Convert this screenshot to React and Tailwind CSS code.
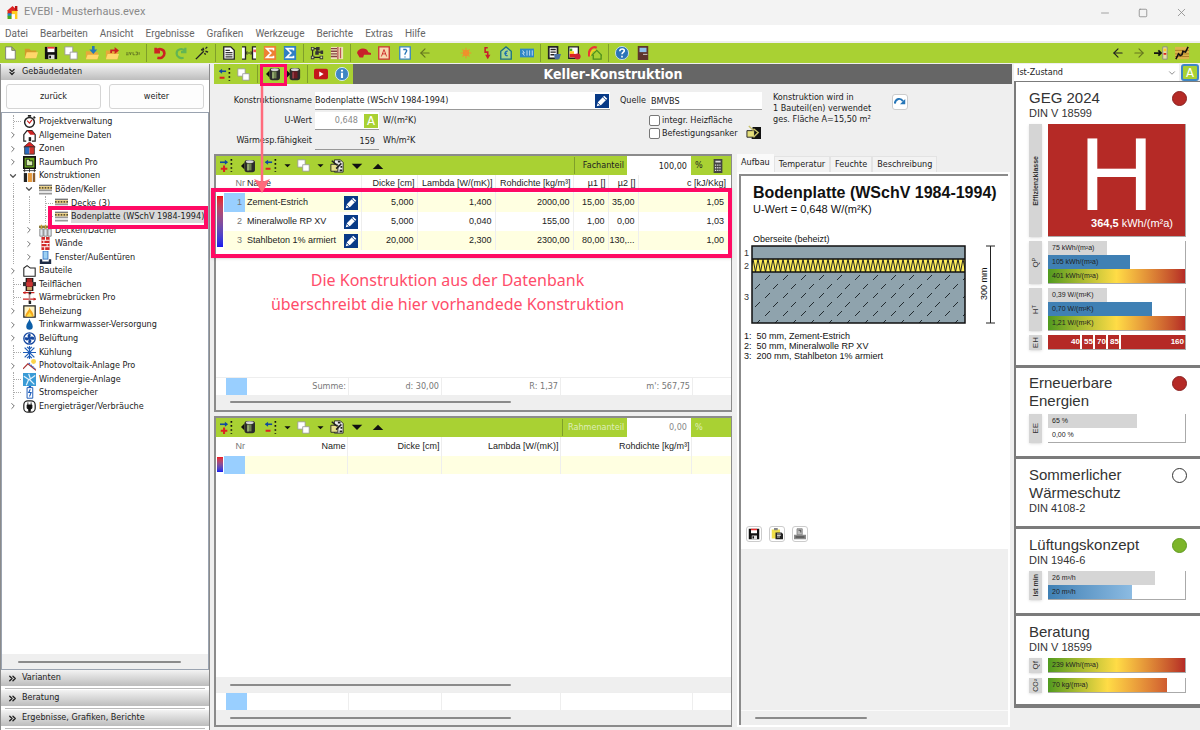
import React, { useState } from 'react';
import { ChevronDown, ChevronRight, ChevronsDown, ChevronsRight, Minus, Square, X, ArrowLeft, ArrowRight } from 'lucide-react';

const Svg = ({ size = 14, children }) => (
  <svg width={size} height={size} viewBox="0 0 16 16" fill="none" className="shrink-0" aria-hidden="true">
    {children}
  </svg>
);

const icons = {
  logo: (
    <>
      <path d="M8 0 15 6H1Z" fill="#d22" />
      <path d="M11 0h3v6h-3z" fill="#b11" />
      <path d="M2 6h12v10H2z" fill="#fc2" />
      <path d="M2 6h5v4H2z" fill="#d22" />
      <path d="M2 9h5v4H2z" fill="#1a8ad0" />
      <path d="M2 12h5v4H2z" fill="#4a2" />
      <path d="M7 10h4v6H7z" fill="#fff" />
    </>
  ),
  file: <path d="M3 1h7l4 4v10H3zM10 1v4h4" fill="#fff" stroke="#777" />,
  folder: (
    <>
      <path d="M1 3h5l2 2h6v9H1z" fill="#d29a2a" />
      <path d="M3 7h13l-2 7H1z" fill="#ffd76a" />
    </>
  ),
  save: (
    <>
      <path d="M1 1h14v14H1z" fill="#111" />
      <path d="M4 1h8v6H4z" fill="#fff" />
      <path d="M4 1h8v2H4z" fill="#e33" />
      <path d="M5 10h7v5H5z" fill="#ddd" />
      <path d="M6 11h2v3H6z" fill="#111" />
    </>
  ),
  copy: (
    <>
      <path d="M1 1h9v9H1z" fill="#fff" stroke="#999" />
      <path d="M7 7h8v8H7z" fill="#fff" stroke="#999" />
    </>
  ),
  folderIn: (
    <>
      <path d="M1 6h5l1 1h8v8H1z" fill="#e8a93a" />
      <path d="M3 10h13l-2 5H1z" fill="#ffd76a" />
      <path d="M8 0h3v4h3L9.500 9 5 4h3z" fill="#2676b8" />
    </>
  ),
  folderOut: (
    <>
      <path d="M1 5h5l1 1h8v9H1z" fill="#e8a93a" />
      <path d="M3 9h13l-2 6H1z" fill="#ffd76a" />
      <path d="M6 8V4h5V1l5 4-5 4V6H8v2z" fill="#c22" />
    </>
  ),
  brand: <path d="M0 8h3M0 10h3M4 7l1 3 1-3M8 7v3h2M11 7h2v3h-2M15 7v3" stroke="#5b6e20" />,
  undo: <path d="M3 2v5h5M3 6c3-4 10-3 10 2.500 0 4-4 6-8 5" stroke="#cc2222" strokeWidth="3" />,
  redo: <path d="M13 2v5H8M13 6C10 2 3 3 3 8.500c0 4 4 6 8 5" stroke="#62b553" strokeWidth="2.500" />,
  wand: <path d="m1 15 9-9M9 2l1 3M14 1l-2 2M15 7l-3-1M7 4l2 1M12 10l-1-2" stroke="#222" strokeWidth="1.600" />,
  doc: (
    <>
      <path d="M2 1h8l4 4v10H2z" fill="#fff" stroke="#222" strokeWidth="1.500" />
      <path d="M4 5h5M4 7.500h8M4 10h8M4 12.500h8" stroke="#333" strokeWidth="1.300" />
    </>
  ),
  compare: (
    <>
      <path d="M0 1h4v14H0M16 1h-4v14h4" fill="#fff" stroke="#222" strokeWidth="1.500" />
      <path d="M4 8h8M6 6 4 8l2 2M10 6l2 2-2 2" stroke="#222" />
      <path d="M13 4h3v3h-3z" fill="#e55" />
    </>
  ),
  sumOrange: (
    <>
      <path d="M1 0h14v16H1z" fill="#ee8033" />
      <path d="M12 5V3H4l5 5-5 5h8v-2" stroke="#fff" strokeWidth="1.800" />
    </>
  ),
  sumBlue: (
    <>
      <path d="M1 0h14v16H1z" fill="#2f7fc4" />
      <path d="M12 5V3H4l5 5-5 5h8v-2" stroke="#fff" strokeWidth="1.800" />
    </>
  ),
  flow: (
    <>
      <path d="M3 3h5v4h5M3 3v10h10M8 3v6" stroke="#222" strokeWidth="1.300" />
      <path d="M1 1h4v4H1zM7 1h4v4H7zM1 11h4v4H1zM6 6h4v4H6zM12 5h3v4h-3zM11 11h4v4h-4z" fill="#333" />
      <path d="M2 2h2v2H2zM2 12h2v2H2zM12 12h2v2h-2z" fill="#cfe39a" />
    </>
  ),
  list: (
    <>
      <path d="M1 1h14v14H1z" fill="#efe2b8" />
      <path d="M1 3h7M1 6h7M1 9h7M1 12h7" stroke="#844" strokeWidth="1.500" />
      <path d="M9 1v14M12 2v12" stroke="#b55" strokeWidth="1.500" />
    </>
  ),
  cap: <path d="M0 8c1-6 11-7 13-1l3 1v2H8l-1 3H3z" fill="#c8202a" />,
  pdf: (
    <>
      <path d="M2 1h12v14H2z" fill="#f7d9b0" stroke="#c33" strokeWidth="1.500" />
      <path d="m5 12 3-8 3 8M6 9h4" stroke="#c22" />
    </>
  ),
  query: (
    <>
      <path d="M2 1h12v14H2z" fill="#fff" stroke="#3b86c0" strokeWidth="1.500" />
      <path d="M6 4h3l1 1.500L8 9v1M8 12v1" stroke="#2676b8" strokeWidth="1.500" />
    </>
  ),
  sun: (
    <>
      <circle cx="8" cy="8" r="3.500" fill="#f08a2c" />
      <path d="M8 2v12M2 8h12M4 4l8 8M12 4l-8 8" stroke="#f0912c" strokeWidth="1.300" />
    </>
  ),
  bolt: (
    <>
      <path d="M10 2H7v5h3v4" stroke="#c8202a" strokeWidth="1.800" />
      <path d="M7 10h6l-3 5z" fill="#c8202a" />
    </>
  ),
  house: (
    <>
      <path d="M2 15V6l6-5 6 5v9z" fill="#a9d68a" stroke="#1c6f86" strokeWidth="1.500" />
      <path d="M10 6C6 5 6 12 10 11M6 8.500h3" stroke="#1d6fb0" strokeWidth="1.500" />
    </>
  ),
  grid: (
    <>
      <path d="M0 3h16v10H0z" fill="#2f86c6" />
      <path d="m3 5 2 3H3l2 3M8 5v6M11 5v6M14 5v6" stroke="#cfe5f5" />
    </>
  ),
  report: (
    <>
      <path d="M2 1h10v13H2z" fill="#fff" stroke="#222" strokeWidth="2" />
      <path d="M4 4h6M4 7h6M4 10h4" stroke="#222" strokeWidth="1.500" />
      <path d="M8 9h8l-2 6H9z" fill="#4a6fa0" />
    </>
  ),
  energy: (
    <>
      <path d="M2 1h11v13H2z" fill="#fff" stroke="#222" strokeWidth="1.500" />
      <path d="M3 3h3v3H3z" fill="#4a2" />
      <path d="M3 6h5v3H3z" fill="#fc2" />
      <path d="M3 9h7v4H3z" fill="#d22" />
      <circle cx="12" cy="12" r="3.500" fill="#cc2233" />
    </>
  ),
  roof: (
    <>
      <path d="M1 12c-1-9 5-12 9-10" stroke="#e33" strokeWidth="2.500" />
      <path d="M3 11c0-5 3-7 6-6" stroke="#fc2" strokeWidth="1.500" />
      <path d="m4 11 6-6 6 6M6 10v5h9v-5" stroke="#4f8f1d" strokeWidth="1.500" />
    </>
  ),
  help: (
    <>
      <circle cx="8" cy="8" r="7.500" fill="#2a74b8" stroke="#cfe5f5" />
      <path d="M5.500 6c0-4 6-3 5 0-1 1.500-2.500 1.500-2.500 3.500M8 11v2" stroke="#fff" strokeWidth="1.800" />
    </>
  ),
  door: (
    <>
      <path d="M2 0h12v16H2z" fill="#5e342c" />
      <path d="M4 2h8v5H4z" fill="#8fc0ea" />
      <path d="M8 9h5v1H8z" fill="#ddd" />
    </>
  ),
  toPanel: (
    <>
      <path d="M0 8h7M5 5l3 3-3 3" stroke="#111" strokeWidth="2" />
      <path d="M10 1h5v14h-5z" fill="#e8dfa0" stroke="#888" />
      <path d="M11 3h3v3h-3z" fill="#fc2" />
      <path d="M11 8h3v2h-3z" fill="#d22" />
    </>
  ),
  chart: (
    <>
      <path d="M0 1h16v14H0z" fill="#dcb44c" />
      <path d="M0 5h16M0 9h16M0 12h16" stroke="#a87a22" />
      <path d="m1 15 3-6 2 2 2-1 1-4 3 1 3-6" stroke="#111" strokeWidth="1.800" />
    </>
  ),
  removeRow: (
    <>
      <path d="M2 4h8" stroke="#124a9c" strokeWidth="2" />
      <path d="M5 1 1 4l4 3z" fill="#124a9c" />
      <path d="M2 12h6" stroke="#d22" strokeWidth="2.500" />
      <path d="M14 0v16" stroke="#111" strokeWidth="2" strokeDasharray="2 3" />
    </>
  ),
  addRow: (
    <>
      <path d="M0 4h8" stroke="#124a9c" strokeWidth="2" />
      <path d="m6 1 4 3-4 3z" fill="#124a9c" />
      <path d="M1 12h8M5 8v8" stroke="#d22" strokeWidth="2.500" />
      <path d="M14 0v16" stroke="#111" strokeWidth="2" strokeDasharray="2 3" />
    </>
  ),
  dbIn: (
    <>
      <path d="M4 4 0 8l4 4z" fill="#111" />
      <rect x="4" y="1" width="12" height="14" rx="3" fill="#2c2c2c" />
      <path d="M7 5h5v8H7z" fill="#6d8050" />
      <path d="M8 6v7" stroke="#a9bd80" strokeWidth="1.500" />
      <ellipse cx="10" cy="3" rx="4.500" ry="1.500" fill="#d5d5d5" />
    </>
  ),
  dbOut: (
    <>
      <path d="m0 4 4 4-4 4z" fill="#111" />
      <rect x="3" y="1" width="12" height="14" rx="3" fill="#2c2c2c" />
      <path d="M6 5h6v8H6z" fill="#6e1a22" />
      <path d="M7 6v7" stroke="#a04a52" strokeWidth="1.500" />
      <ellipse cx="9" cy="3" rx="4.500" ry="1.500" fill="#d5d5d5" />
    </>
  ),
  video: (
    <>
      <rect x="0" y="2" width="16" height="12" rx="2" fill="#c4161c" />
      <path d="m6 5 5 3-5 3z" fill="#fff" />
    </>
  ),
  info: (
    <>
      <circle cx="8" cy="8" r="7.500" fill="#3f86c4" stroke="#e3f0fa" />
      <path d="M8 3v2M8 6.500v6" stroke="#fff" strokeWidth="2.400" />
    </>
  ),
  editDoc: (
    <>
      <path d="M5 1h7l3 3v11H5z" fill="#eee" stroke="#222" />
      <path d="M1 6h8v8H1z" fill="#e5df8a" stroke="#222" />
      <path d="m2 2 6 5M13 5l-6 6M9 3h3M11 13h3M12 9h2" stroke="#222" strokeWidth="1.800" />
    </>
  ),
  down: <path d="M1 5h14l-7 7z" fill="#111" />,
  up: <path d="M1 12h14L8 5z" fill="#111" />,
  pencil: (
    <>
      <path d="M0 0h16v16H0z" fill="#083a86" />
      <path d="m2 14 1.500-5 7-7 3.500 3.500-7 7z" fill="#fff" />
      <path d="m9 3.500 3.500 3.500M3 10l3 3" stroke="#083a86" />
    </>
  ),
  calc: (
    <>
      <path d="M3 0h10v16H3z" fill="#444" />
      <path d="M5 2h6v2H5z" fill="#ddd" />
      <path d="M4.500 7h7M4.500 10h7M4.500 13h7" stroke="#ddd" strokeWidth="1.500" strokeDasharray="1.500 1" />
    </>
  ),
  anchor: (
    <>
      <path d="M7 2h9v13H6z" fill="#111" />
      <path d="M1 6h8v7H1z" fill="#e5df7a" stroke="#222" />
      <path d="M3 1 8 6M8 4l5 4-5 5" stroke="#c8c26a" strokeWidth="1.500" />
    </>
  ),
  jump: (
    <>
      <path d="M1 10c1-7 8-8 11-3" stroke="#2676b8" strokeWidth="2.600" />
      <path d="M15 4v7H8z" fill="#2676b8" />
    </>
  ),
  clip: (
    <>
      <path d="M1 2h11v12H1z" fill="#f0e04a" />
      <path d="M4 0h5v3H4z" fill="#888" />
      <path d="M6 6h8l2 2v7H6z" fill="#222" />
      <path d="M8 8h5M8 10h5M8 12h4" stroke="#fff" />
    </>
  ),
  stamp: (
    <>
      <path d="M4 1h7v8H4z" fill="#bbb" stroke="#777" />
      <path d="M0 9h16v6H0z" fill="#8a8a8a" />
      <path d="M2 12h12" stroke="#444" strokeWidth="1.500" />
      <path d="M6 3h3v3" stroke="#333" />
    </>
  ),
  clock: (
    <>
      <circle cx="8" cy="9" r="6" fill="#fff" stroke="#222" strokeWidth="1.800" />
      <path d="M6 1h4M13 2l2 2" stroke="#222" strokeWidth="2" />
      <path d="m5 7 3 3 3-4" stroke="#c22" strokeWidth="1.500" />
    </>
  ),
  home: (
    <>
      <path d="M4 15H1V7l4-5h6l4 5v8h-4" fill="#fff" stroke="#222" strokeWidth="1.500" />
      <path d="M5 2h6l4 5H9z" fill="#c22" />
      <path d="M7 10h3v5H7z" fill="#222" />
    </>
  ),
  zones: (
    <>
      <path d="M8 0 15 6H1z" fill="#d22" stroke="#522" />
      <path d="M2 6h6v9H2z" fill="#2b6cc0" />
      <path d="M8 6h6v9H8z" fill="#d0342c" />
      <path d="M2 6h12v9H2z" stroke="#333" />
    </>
  ),
  room: (
    <>
      <path d="M1 1h14v14H1z" fill="#6cab1f" stroke="#111" strokeWidth="2" />
      <path d="M4 4h4v2h4v6H4z" fill="#d5ecad" stroke="#111" />
    </>
  ),
  layers: (
    <>
      <path d="M0 2h16M2 0v4M8 0v4M14 0v4" stroke="#222" />
      <path d="M1 5h4v11H1z" fill="#222" />
      <path d="M6 5h5v11H6z" fill="#e79a3c" />
      <path d="M12 5h3v11h-3z" fill="#8a5a2b" />
    </>
  ),
  floor: (
    <>
      <path d="M0 2h16v2H0z" fill="#777" />
      <path d="M0 4h16v4H0z" fill="#f1d27a" />
      <path d="M0 6h16" stroke="#222" strokeWidth="1.500" strokeDasharray="2 1.500" />
      <path d="M0 9h16M0 13h16" stroke="#999" strokeWidth="2" />
    </>
  ),
  ceiling: (
    <>
      <path d="M0 2h16v3H0z" fill="#8a7a3a" />
      <path d="M1 6h4v9H1zM6 6h4v9H6zM11 6h4v9h-4z" fill="#dfe7ee" stroke="#777" />
      <path d="M3 1v5M8 1v5M13 1v5" stroke="#c9a13a" strokeWidth="1.500" />
    </>
  ),
  wall: (
    <>
      <path d="M3 0h10v16H3z" fill="#d22a2a" />
      <path d="M3 4h10M3 8h10M3 12h10M8 0v4M6 4v4M10 8v4M7 12v4" stroke="#fff" strokeWidth="1.200" />
    </>
  ),
  windowIcon: (
    <>
      <path d="M5 0h6v10H5z" fill="#9ed0f2" stroke="#2b6cc0" />
      <path d="M1 10h3v3h8v-3h3v6H1z" fill="#1d2a44" />
    </>
  ),
  part: <path d="M1 15V5l4-3 4 3h6v10z" fill="#fff" stroke="#222" strokeWidth="1.300" />,
  areas: (
    <>
      <path d="M4 0h8v16H4z" fill="#a22" stroke="#111" strokeWidth="1.500" />
      <path d="M0 5h16v5H0z" fill="#333" />
      <path d="M4 5h8v5H4z" fill="#c33" />
      <path d="M5 11h6v4H5z" fill="#c9a86a" />
    </>
  ),
  bridge: (
    <>
      <path d="M0 2h14M0 10h16" stroke="#c22" strokeWidth="1.500" />
      <path d="M3 0 0 2l3 2M13 8l3 2-3 2" fill="#c22" />
      <path d="M8 2v12" stroke="#b88" strokeWidth="2" />
      <path d="M7 1h3v3H7zM7 12h3v4H7z" fill="#222" />
    </>
  ),
  flame: (
    <>
      <path d="M1 1h14v14H1z" fill="#fff3c4" stroke="#222" strokeWidth="1.500" />
      <path d="M8 3c1 4 5 5 5 11H3c0-5 4-6 5-11z" fill="#f6a81c" />
      <path d="M8 8c0 2 3 3 3 6H5c0-3 3-3 3-6z" fill="#fbe04b" />
    </>
  ),
  drop: <path d="M8 1c1 4 4 6 4 9.500a4 4 0 0 1-8 0C4 7 7 5 8 1z" fill="#0c5ea8" />,
  fan: (
    <>
      <circle cx="8" cy="8" r="7" fill="#fff" stroke="#1547a0" strokeWidth="1.600" />
      <path d="M8 8c-4-2-2-6 0-6s2 3 0 6c2-4 6-2 6 0s-3 2-6 0c4 2 2 6 0 6s-2-3 0-6c-2 4-6 2-6 0s3-2 6 0z" fill="#1547a0" />
    </>
  ),
  snow: <path d="M8 0v16M0 8h16M2 2l12 12M14 2 2 14M5 1l3 3 3-3M5 15l3-3 3 3" stroke="#1d5cb8" strokeWidth="1.500" />,
  pv: (
    <>
      <path d="m0 12 6-6 10 8" stroke="#a33" strokeWidth="1.500" />
      <path d="m7 5 8 7" stroke="#36c" strokeWidth="1.500" strokeDasharray="2 1" />
      <circle cx="13" cy="3" r="3" fill="#fbd44a" />
    </>
  ),
  wind: (
    <>
      <path d="M0 0h16v16H0z" fill="#3a9bd6" />
      <path d="m1 4 6 4-3 7M15 3 8 8l6 6M7 1l2 6" stroke="#e3f3fd" strokeWidth="1.500" />
    </>
  ),
  battery: (
    <>
      <path d="M5 2h7v13H5z" fill="#fff" stroke="#1d5cb8" strokeWidth="1.200" />
      <path d="M7 0h3v2H7z" fill="#1d5cb8" />
      <path d="m9 4-2 4h3l-2 5" stroke="#1d5cb8" strokeWidth="1.300" />
    </>
  ),
  plug: (
    <>
      <rect x="1" y="1" width="14" height="14" rx="5" fill="#fff" stroke="#222" strokeWidth="1.500" />
      <path d="M5 6h6v4l-2 2v2H7v-2l-2-2zM6 3v3M10 3v3" fill="#111" stroke="#111" />
    </>
  ),
};

const Icon = ({ name, size }) => <Svg size={size}>{icons[name]}</Svg>;

const ToolButton = ({ name, label, size, className = 'flex-1' }) => (
  <button type="button" aria-label={label || name} className={`flex h-full items-center justify-center ${className}`}>
    {name === 'back' && <ArrowLeft size={14} color="#222" />}
    {name === 'backDim' && <ArrowLeft size={14} color="#66771f" />}
    {name === 'forward' && <ArrowRight size={14} color="#66771f" />}
    {icons[name] && <Icon name={name} size={size} />}
  </button>
);

const Separator = ({ className = 'w-[7px]' }) => (
  <span className={`flex h-full shrink-0 justify-center ${className}`}>
    <span className="my-px w-px bg-[#7f9f2a]" />
  </span>
);

const menu = ['Datei', 'Bearbeiten', 'Ansicht', 'Ergebnisse', 'Grafiken', 'Werkzeuge', 'Berichte', 'Extras', 'Hilfe'];

const toolbar = [
  { width: 'w-[143px]', items: ['file', 'folder', 'save', 'copy', 'folderIn', 'folderOut', 'brand'] },
  { width: 'w-[62px]', items: ['undo', 'redo', 'wand'] },
  { width: 'w-[81px]', items: ['doc', 'compare', 'sumOrange', 'sumBlue'] },
  { width: 'w-[40px]', items: ['flow', 'list'] },
  { width: 'w-[183px]', items: ['cap', 'pdf', 'query', 'backDim', '', 'sun', 'bolt', 'house', 'grid'] },
  { width: 'w-[61px]', items: ['report', 'energy', 'roof'] },
  { width: 'w-[41px]', items: ['help', 'door'] },
];

const tree = [
  { level: 0, icon: 'clock', label: 'Projektverwaltung' },
  { level: 0, icon: 'home', label: 'Allgemeine Daten', state: 'closed' },
  { level: 0, icon: 'zones', label: 'Zonen', state: 'closed' },
  { level: 0, icon: 'room', label: 'Raumbuch Pro', state: 'closed' },
  { level: 0, icon: 'layers', label: 'Konstruktionen', state: 'open' },
  { level: 1, icon: 'floor', label: 'Böden/Keller', state: 'open' },
  { level: 2, icon: 'floor', label: 'Decke (3)' },
  { level: 2, icon: 'floor', label: 'Bodenplatte (WSchV 1984-1994)', selected: true },
  { level: 1, icon: 'ceiling', label: 'Decken/Dächer', state: 'closed' },
  { level: 1, icon: 'wall', label: 'Wände', state: 'closed' },
  { level: 1, icon: 'windowIcon', label: 'Fenster/Außentüren', state: 'closed' },
  { level: 0, icon: 'part', label: 'Bauteile', state: 'closed' },
  { level: 0, icon: 'areas', label: 'Teilflächen' },
  { level: 0, icon: 'bridge', label: 'Wärmebrücken Pro' },
  { level: 0, icon: 'flame', label: 'Beheizung', state: 'closed' },
  { level: 0, icon: 'drop', label: 'Trinkwarmwasser-Versorgung', state: 'closed' },
  { level: 0, icon: 'fan', label: 'Belüftung', state: 'closed' },
  { level: 0, icon: 'snow', label: 'Kühlung' },
  { level: 0, icon: 'pv', label: 'Photovoltaik-Anlage Pro', state: 'closed' },
  { level: 0, icon: 'wind', label: 'Windenergie-Anlage' },
  { level: 0, icon: 'battery', label: 'Stromspeicher' },
  { level: 0, icon: 'plug', label: 'Energieträger/Verbräuche', state: 'closed' },
];

const layers = [
  { nr: 1, name: 'Zement-Estrich', values: ['5,000', '1,400', '2000,00', '15,00', '35,00', '1,05'] },
  { nr: 2, name: 'Mineralwolle RP XV', values: ['5,000', '0,040', '155,00', '1,00', '0,00', '1,03'] },
  { nr: 3, name: 'Stahlbeton 1% armiert', values: ['20,000', '2,300', '2300,00', '80,00', '130,...', '1,00'] },
];

const TitleBar = () => (
  <header className="shrink-0 font-[Roboto,sans-serif] text-[#8a8a8a]">
    <div className="flex h-[25px] items-center bg-[#f3f3f3] pl-1.5 text-[11px]">
      <Icon name="logo" size={13} />
      <span className="ml-[5px] flex-1">EVEBI - Musterhaus.evex</span>
      <button type="button" aria-label="Minimieren" className="flex w-[38px] justify-center"><Minus size={12} strokeWidth={1.5} /></button>
      <button type="button" aria-label="Maximieren" className="flex w-[38px] justify-center"><Square size={10} strokeWidth={2} /></button>
      <button type="button" aria-label="Schließen" className="flex w-[38px] justify-center"><X size={13} strokeWidth={1.5} /></button>
    </div>
    <nav className="flex h-[18px] items-center gap-3 border-b-2 border-[#efefef] bg-white pl-[5px] text-[10px] text-[#666]">
      {menu.map((entry) => (
        <button type="button" key={entry}>{entry}</button>
      ))}
    </nav>
  </header>
);

const Toolbar = () => (
  <div className="flex h-[20px] shrink-0 items-center bg-[#a9d133]">
    {toolbar.map((group, groupIdx) => (
      <React.Fragment key={groupIdx}>
        {groupIdx > 0 && <Separator />}
        <div className={`flex h-full shrink-0 ${group.width}`}>
          {group.items.map((item, itemIdx) =>
            item ? <ToolButton key={itemIdx} name={item} /> : <span key={itemIdx} className="flex-1" />
          )}
        </div>
      </React.Fragment>
    ))}
    <div className="mr-[7px] ml-auto flex h-full w-[86px]">
      {['back', 'forward', 'toPanel', 'chart'].map((item) => (
        <ToolButton key={item} name={item} />
      ))}
    </div>
  </div>
);

const TreeRow = ({ item }) => (
  <li className="relative flex min-h-0 items-center pl-[3px]">
    {Array.from({ length: item.level }).map((_, i) => (
      <span key={i} className="flex w-4 shrink-0 justify-center self-stretch">
        <span className="border-l border-dotted border-[#aaa]" />
      </span>
    ))}
    <span className="flex w-4 shrink-0 items-center justify-center self-stretch text-[#555]">
      {item.state === 'open' && <ChevronDown size={10} strokeWidth={3} />}
      {item.state === 'closed' && <ChevronRight size={10} strokeWidth={2} />}
      {!item.state && (
        <>
          <span className="ml-2 self-stretch border-l border-dotted border-[#aaa]" />
          <span className="w-2 border-t border-dotted border-[#aaa]" />
        </>
      )}
    </span>
    <span className="flex w-4 shrink-0 justify-center"><Icon name={item.icon} size={13} /></span>
    <button type="button" className={`ml-0.5 whitespace-nowrap leading-[13px] ${item.selected ? 'bg-[#d9d9d9]' : ''}`}>{item.label}</button>
    {item.selected && <span className="pointer-events-none absolute -top-1 right-0 left-[46px] z-10 h-[23px] border-4 border-[#ff0a64]" />}
  </li>
);

const Scrollbar = ({ thumb, className = 'pl-[14px]' }) => (
  <div className={`flex h-[15px] shrink-0 items-center bg-[#efefef] ${className}`}>
    <span className={`h-[2px] rounded bg-[#8b8b8b] ${thumb}`} />
  </div>
);

const Sidebar = () => (
  <aside className="flex w-[210px] shrink-0 flex-col border-x border-[#8b8b8b] bg-white">
    <button type="button" className="flex h-4 shrink-0 items-center gap-[5px] bg-linear-to-b from-[#f3f3f3] to-[#bdbdbd] pl-1.5">
      <ChevronsDown size={10} strokeWidth={3} />
      Gebäudedaten
    </button>
    <div className="flex shrink-0 gap-2 px-[5px] pt-1 pb-[3px]">
      {['zurück', 'weiter'].map((label) => (
        <button type="button" key={label} className="h-[25px] flex-1 rounded-[3px] border border-[#d5d5d5] bg-[#fdfdfd]">{label}</button>
      ))}
    </div>
    <div className="flex min-h-0 flex-1 flex-col border border-[#9aa3b0] pt-0.5">
      <ul className="grid h-[298px] auto-rows-fr">
        {tree.map((item) => (
          <TreeRow key={item.label} item={item} />
        ))}
      </ul>
      <div className="flex-1" />
      <Scrollbar thumb="w-[86%]" className="pr-[1px] pl-[16px]" />
    </div>
    {['Varianten', 'Beratung', 'Ergebnisse, Grafiken, Berichte'].map((label) => (
      <div key={label} className="h-5 shrink-0">
        <button type="button" className="flex h-4 w-full items-center gap-1 bg-linear-to-b from-[#f3f3f3] to-[#bdbdbd] pl-1.5">
          <ChevronsRight size={11} strokeWidth={3} />
          {label}
        </button>
        <div className="mx-1 mt-0.5 h-px bg-[#bbb]" />
      </div>
    ))}
  </aside>
);

const ConstructionForm = () => (
  <div className="flex h-[70px] shrink-0 pt-2">
    <div className="grid w-[396px] shrink-0 grid-cols-[98px_1fr] content-start items-center gap-x-[3px] gap-y-[2px]">
      <label htmlFor="name" className="text-right">Konstruktionsname</label>
      <div className="flex h-[18px] items-center border-b border-[#999] bg-white pr-px">
        <input id="name" className="min-w-0 flex-1 outline-none" defaultValue="Bodenplatte (WSchV 1984-1994)" />
        <button type="button" aria-label="Bearbeiten"><Icon name="pencil" /></button>
      </div>
      <label htmlFor="uwert" className="text-right">U-Wert</label>
      <div className="flex items-center gap-1">
        <div className="flex h-[18px] w-[64px] items-center border-b border-[#999] bg-white">
          <input id="uwert" className="w-[43px] text-right text-[#888] outline-none" defaultValue="0,648" />
          <span className="ml-1.5 h-[14px] w-[14px] bg-[#a9d133] text-center text-[13px] leading-[14px] text-white">A</span>
        </div>
        W/(m²K)
      </div>
      <label htmlFor="heat" className="text-right">Wärmesp.fähigkeit</label>
      <div className="flex items-center gap-1">
        <input id="heat" className="h-[18px] w-[64px] border-b border-[#999] bg-[#efefef] pr-1 text-right outline-none" defaultValue="159" />
        Wh/m²K
      </div>
    </div>
    <div className="ml-2.5 w-[142px] shrink-0">
      <div className="flex h-[18px] items-center justify-between">
        <label htmlFor="source">Quelle</label>
        <input id="source" className="h-[18px] w-[112px] border-b border-[#999] bg-white px-px outline-none" defaultValue="BMVBS" />
      </div>
      <div className="flex items-end pt-1">
        <div className="ml-[29px]">
          {['integr. Heizfläche', 'Befestigungsanker'].map((label) => (
            <label key={label} className="flex h-[13px] items-center gap-0.5 whitespace-nowrap">
              <input type="checkbox" className="h-[11px] w-[11px] appearance-none rounded-[2px] border border-[#777] bg-white checked:bg-[#2676b8]" />
              {label}
            </label>
          ))}
        </div>
        <button type="button" aria-label="Befestigungsanker bearbeiten" className="ml-[8px]"><Icon name="anchor" size={15} /></button>
      </div>
    </div>
    <p className="ml-[11px] w-[119px] shrink-0 leading-[11px]">
      Konstruktion wird in<br />1 Bauteil(en) verwendet<br />ges. Fläche A=15,50 m²
    </p>
    <button type="button" aria-label="Verwendung anzeigen" className="mt-0.5 flex h-4 w-4 items-center justify-center rounded-[3px] border border-[#ccc] bg-white">
      <Icon name="jump" size={12} />
    </button>
  </div>
);

const LayerToolbar = ({ label, value, dim }) => (
  <div className="flex h-[19px] shrink-0 items-center bg-[#a9d133]">
    <ToolButton name="addRow" label="Schicht einfügen" size={13} className="w-[20px]" />
    <ToolButton name="dbIn" label="Aus Datenbank" className="w-[24px]" />
    <ToolButton name="removeRow" label="Schicht entfernen" size={13} className="w-[20px]" />
    <ToolButton name="down" size={7} label="Mehr" className="w-[14px]" />
    <ToolButton name="copy" label="Kopieren" size={13} className="w-[18px]" />
    <ToolButton name="down" size={7} label="Mehr" className="w-[16px]" />
    <ToolButton name="editDoc" label="Schicht bearbeiten" className="w-[18px]" />
    <ToolButton name="down" size={12} label="Nach unten" className="w-[22px]" />
    <ToolButton name="up" size={12} label="Nach oben" className="w-[20px]" />
    <div className="ml-auto flex h-full items-center">
      <Separator className="w-[11px]" />
      <label htmlFor={label} className={`mr-[3px] text-right ${dim ? 'w-[56px] text-[#dfeebb]' : 'w-[44px]'}`}>{label}</label>
      <input id={label} className={`h-[19px] w-[64px] bg-white pr-1 text-right outline-none ${dim ? 'text-[#888]' : ''}`} defaultValue={value} />
      <span className={`flex w-[40px] items-center gap-2 pl-1 ${dim ? 'text-[#dfeebb]' : ''}`}>%{!dim && <Icon name="calc" />}</span>
    </div>
  </div>
);

const LayerTable = () => (
  <div className="relative">
    <table className="w-full table-fixed font-['Liberation_Sans',Arial,sans-serif]">
      <colgroup>
        <col className="w-[8px]" />
        <col className="w-[21px]" />
        <col className="w-[97px]" />
        <col className="w-[19px]" />
        <col className="w-[56px]" />
        <col className="w-[78px]" />
        <col className="w-[78px]" />
        <col className="w-[35px]" />
        <col className="w-[30px]" />
        <col />
      </colgroup>
      <thead>
        <tr className="h-[18px]">
          <th aria-label="Verlauf" />
          <th className="p-0 text-right font-normal text-[#777]">Nr</th>
          <th colSpan={2} className="p-0 pl-0.5 text-left font-normal">Name</th>
          {['Dicke [cm]', 'Lambda [W/(mK)]', 'Rohdichte [kg/m³]', 'µ1 []', 'µ2 []', 'c [kJ/Kkg]'].map((head, i) => (
            <th key={head} className={`border-l border-[#eee] p-0 text-right font-normal whitespace-nowrap ${i === 5 ? 'pr-[5px]' : 'pr-0.5'}`}>{head}</th>
          ))}
        </tr>
      </thead>
      <tbody>
        {layers.map((layer, rowIdx) => (
          <tr key={layer.nr} className={`h-[19px] ${rowIdx % 2 ? 'bg-white' : 'bg-[#ffffe1]'}`}>
            {rowIdx === 0 && (
              <td rowSpan={3} className="bg-white p-0">
                <div className="ml-px h-[51px] w-[6px] bg-linear-to-b from-[#ee0a14] to-[#1a14ee]" />
              </td>
            )}
            <td className={`p-0 pr-[3px] text-right text-[#777] ${rowIdx === 0 ? 'bg-[#99cfff]' : ''}`}>{layer.nr}</td>
            <td className="p-0 pl-0.5 whitespace-nowrap">{layer.name}</td>
            <td className="p-0">
              <button type="button" aria-label={`${layer.name} bearbeiten`} className="mx-auto block"><Icon name="pencil" /></button>
            </td>
            {layer.values.map((value, i) => (
              <td key={i} className={`border-l border-[#eee] p-0 text-right ${i === 5 ? 'pr-[7px]' : 'pr-[3px]'}`}>{value}</td>
            ))}
          </tr>
        ))}
      </tbody>
    </table>
    <div className="pointer-events-none absolute top-[13px] -right-px -left-[5px] z-10 h-[70px] border-4 border-[#ff0a64] shadow-sm" />
  </div>
);

const FooterRow = ({ cells }) => (
  <div className="flex h-[18px] shrink-0 items-center border-t border-[#eee] text-[#777]">
    <span className="ml-[10px] h-full w-[21px] bg-[#99cfff]" />
    <span className="flex h-full w-[102px] items-center justify-end border-r border-[#eee] pr-0.5">{cells[0]}</span>
    <span className="flex h-full w-[93px] items-center justify-end border-r border-[#eee] pr-0.5">{cells[1]}</span>
    <span className="flex h-full w-[119px] items-center justify-end border-r border-[#eee] pr-0.5">{cells[2]}</span>
    <span className="flex h-full w-[132px] items-center justify-end border-r border-[#eee] pr-0.5">{cells[3]}</span>
  </div>
);

const FrameTable = () => (
  <table className="w-full table-fixed font-['Liberation_Sans',Arial,sans-serif]">
    <colgroup>
      <col className="w-[8px]" />
      <col className="w-[21px]" />
      <col className="w-[102px]" />
      <col className="w-[94px]" />
      <col className="w-[119px]" />
      <col className="w-[131px]" />
      <col />
    </colgroup>
    <thead>
      <tr className="h-[19px]">
        <th aria-label="Verlauf" />
        <th className="p-0 text-right font-normal text-[#777]">Nr</th>
        {['Name', 'Dicke [cm]', 'Lambda [W/(mK)]', 'Rohdichte [kg/m³]'].map((head) => (
          <th key={head} className="border-r border-[#eee] p-0 pr-px text-right font-normal">{head}</th>
        ))}
        <th aria-label="Weitere" />
      </tr>
    </thead>
    <tbody>
      <tr className="h-[18px] bg-[#ffffe1]">
        <td className="bg-white p-0"><div className="ml-px h-[15px] w-[6px] bg-linear-to-b from-[#ee0a14] to-[#1a14ee]" /></td>
        <td className="bg-[#99cfff]" />
        {[1, 2, 3, 4].map((cell) => <td key={cell} className="border-r border-[#eee]" />)}
        <td />
      </tr>
    </tbody>
  </table>
);

// Cross section of the floor slab with its layer numbers and the dimension line
const CrossSection = () => (
  <svg viewBox="0 0 256 80" className="block w-[256px] font-['Liberation_Sans',Arial,sans-serif]" fontSize="9">
    <defs>
      <pattern id="insulation" width="5" height="13" patternUnits="userSpaceOnUse" y="14">
        <path d="M0 0 2.500 13 5 0" fill="none" stroke="#222" />
      </pattern>
      <pattern id="concrete" width="18" height="18" patternUnits="userSpaceOnUse" y="27">
        <path d="m4 8 5-5M12 17l5-5" stroke="#222b30" strokeWidth="1" />
      </pattern>
    </defs>
    <path d="M9 1h213v77H9z" fill="#8fa3ad" />
    <path d="M9 14h213v13H9z" fill="#ffee58" />
    <path d="M9 14h213v13H9z" fill="url(#insulation)" />
    <path d="M9 27h213v51H9z" fill="url(#concrete)" />
    <path d="M9 1h213v77H9zM9 14h213M9 27h213" fill="none" stroke="#111" strokeWidth="1.500" />
    <text x="1" y="11" fill="#333">1</text>
    <text x="1" y="24" fill="#333">2</text>
    <text x="1" y="55" fill="#333">3</text>
    <path d="M243 1h9M243 78h9M247.500 1v77" stroke="#222" />
    <text transform="translate(244 55) rotate(-90)" fill="#111">300 mm</text>
  </svg>
);

const tabs = ['Aufbau', 'Temperatur', 'Feuchte', 'Beschreibung'];

const DetailPane = () => {
  const [active, setActive] = useState('Aufbau');

  return (
    <section className="flex w-[273px] shrink-0 flex-col">
      <div role="tablist" className="flex h-[18px] items-end">
        {tabs.map((tab) => (
          <button
            type="button"
            role="tab"
            key={tab}
            aria-selected={active === tab}
            onClick={() => setActive(tab)}
            className={`px-1 ${active === tab ? 'h-[18px] bg-[#fafafa]' : 'h-[16px] border border-b-0 border-[#e3e3e3] bg-[#f3f3f3]'}`}
          >
            {tab}
          </button>
        ))}
      </div>
      <div className="flex min-h-0 flex-1 flex-col border-2 border-white bg-[#efefef]">
        <div className="flex min-h-0 flex-1 flex-col border-t-2 border-l-2 border-[#8b8b8b]">
          <div className="flex h-[373px] flex-col bg-white pt-2 pl-0.5 font-['Liberation_Sans',Arial,sans-serif] text-[#111]">
            <h2 className="pl-[10px] text-[16px] leading-[18px] font-bold whitespace-nowrap">Bodenplatte (WSchV 1984-1994)</h2>
            <p className="pl-[10px] text-[11px] leading-[14px]">U-Wert = 0,648 W/(m²K)</p>
            <p className="mt-[18px] pl-[10px] leading-[11px]">Oberseite (beheizt)</p>
            <CrossSection />
            <ol className="mt-[6px] pl-px leading-[10px]">
              <li>1:&nbsp; 50 mm, Zement-Estrich</li>
              <li>2:&nbsp; 50 mm, Mineralwolle RP XV</li>
              <li>3:&nbsp; 200 mm, Stahlbeton 1% armiert</li>
            </ol>
            <div className="mt-auto mb-[7px] flex gap-[7px] pl-[3px]">
              {['save', 'clip', 'stamp'].map((name) => (
                <button type="button" key={name} aria-label={name} className="flex h-4 w-4 items-center justify-center rounded-[3px] border border-[#ccc]">
                  <Icon name={name} size={12} />
                </button>
              ))}
            </div>
          </div>
          <div className="flex-1" />
          <Scrollbar thumb="w-[112px]" className="border-t border-[#fafafa] pl-[14px]" />
        </div>
      </div>
    </section>
  );
};

const Main = () => (
  <main className="relative flex min-w-0 flex-1 flex-col bg-[#efefef] pl-1">
    <div className="mr-0.5 flex h-[20px] shrink-0 bg-[#666]">
      <div className="flex bg-[#a9d133]">
        <ToolButton name="removeRow" label="Konstruktion entfernen" size={13} className="w-[20px]" />
        <ToolButton name="copy" label="Konstruktion kopieren" size={13} className="w-[19px]" />
        <Separator className="w-[9px]" />
        <div className="relative flex">
          <ToolButton name="dbIn" label="Aus Datenbank laden" className="w-[22px]" />
          <span className="pointer-events-none absolute top-0 -left-0.5 z-10 h-[22px] w-[27px] border-[3px] border-[#ff0a64]" />
        </div>
        <ToolButton name="dbOut" label="In Datenbank speichern" className="w-[20px]" />
        <Separator className="w-[6px]" />
        <ToolButton name="video" label="Video" className="w-[21px]" />
        <ToolButton name="info" label="Info" className="w-[22px]" />
      </div>
      <h1 className="flex-1 pr-[139px] text-center text-[14px] leading-[20px] font-bold text-white">Keller-Konstruktion</h1>
    </div>
    <ConstructionForm />
    <div className="flex min-h-0 flex-1 gap-[5px] pr-1 pb-[3px]">
      <div className="flex min-w-0 flex-1 flex-col gap-1">
        <section className="flex min-h-0 flex-[258] flex-col border-2 border-r border-[#8b8b8b] bg-white">
          <LayerToolbar label="Fachanteil" value="100,00" />
          <LayerTable />
          <p className="flex-1 pt-[18px] pr-[52px] text-center font-['Noto_Sans',sans-serif] text-[16px] leading-[24px] text-[#ff4d6a]">
            Die Konstruktion aus der Datenbank<br />überschreibt die hier vorhandede Konstruktion
          </p>
          <FooterRow cells={['Summe:', 'd: 30,00', 'R: 1,37', "m': 567,75"]} />
          <Scrollbar thumb="w-[56%]" />
        </section>
        <section className="flex min-h-0 flex-[312] flex-col border-2 border-r border-[#8b8b8b] bg-white">
          <LayerToolbar label="Rahmenanteil" value="0,00" dim />
          <FrameTable />
          <div className="flex-1" />
          <Scrollbar thumb="w-[56%]" />
          <FooterRow cells={['', '', '', '']} />
          <Scrollbar thumb="w-[56%]" />
        </section>
      </div>
      <DetailPane />
    </div>
    {/* Callout arrow from the database button to the layers */}
    <svg width="18" height="108" viewBox="0 0 18 108" fill="none" className="pointer-events-none absolute top-[22px] left-[43px] z-20">
      <path d="M9 0v98" stroke="#ff6b7c" strokeWidth="2.500" />
      <path d="M9 107 1 93l8 3 8-3z" fill="#ff6b7c" />
    </svg>
  </main>
);

const Bar = ({ width, color, children }) => (
  <div className={`h-[14px] pl-1 text-[7px] leading-[13px] whitespace-nowrap text-[#222] ${width} ${color}`}>{children}</div>
);

const Meter = ({ label, children }) => (
  <div className="flex gap-1.5">
    <div className="flex w-[13px] shrink-0 items-center justify-center bg-[#d5d5d5] text-[8px] shadow-sm">
      <span className="rotate-180 leading-[13px] whitespace-nowrap [writing-mode:vertical-rl]">{label}</span>
    </div>
    <div className="min-w-0 flex-1 border-r border-b border-[#aaa]">{children}</div>
  </div>
);

const Card = ({ title, norm, light, children, className }) => (
  <section className={`bg-white pr-[14px] pl-[13px] ${className}`}>
    <div className="flex justify-between">
      <div>
        <h3 className="text-[15px] leading-[18px] whitespace-pre-line">{title}</h3>
        {norm && <p className="text-[11px] leading-[12px]">{norm}</p>}
      </div>
      <span className={`mt-0.5 -mr-px h-[15px] w-[15px] rounded-full border ${light}`} />
    </div>
    {children}
  </section>
);

const rainbow = 'bg-linear-to-r from-[#4f9a1f] via-[#ffdc46] to-[#b52a26]';

const ResultsPanel = () => (
  <aside className="flex w-[186px] shrink-0 flex-col bg-[#efefef]">
    <div className="flex h-[17px] items-center">
      <select aria-label="Variante" className="h-[17px] min-w-0 flex-1 appearance-none bg-white pl-[3px] outline-none">
        <option>Ist-Zustand</option>
      </select>
      <ChevronDown size={10} className="pointer-events-none -ml-3 shrink-0 text-[#777]" />
      <button type="button" className="mr-px ml-1 h-[17px] w-[18px] rounded-[3px] border-2 border-[#3f86c4] bg-[#a9d133] text-[13px] leading-[13px] text-white">A</button>
    </div>
    <div className="flex flex-col gap-[3px] border-t border-b-4 border-l-2 border-[#7b7b7b] bg-[#7b7b7b] font-['Liberation_Sans',Arial,sans-serif] text-[#333]">
      <Card title="GEG 2024" norm="DIN V 18599" light="border-[#8a2020] bg-[#b52a26]" className="h-[283px] pt-[7px]">
        <div className="mt-[5px] space-y-1">
          <Meter label={<span className="text-[7px] font-bold">Effizienzklasse</span>}>
            <div className="flex h-[112px] flex-col bg-[#b52a26] pt-2.5 text-center text-white">
              <span className="text-[104px] leading-[80px]">H</span>
              <span className="mt-px pr-3 text-right text-[11px] leading-4"><b>364,5</b> kWh/(m²a)</span>
            </div>
          </Meter>
          <Meter label="Qᴾ">
            <Bar width="w-[43%]" color="bg-[#d5d5d5]">75 kWh/(m²a)</Bar>
            <Bar width="w-[60%]" color="bg-[#3f80b4]">105 kWh/(m²a)</Bar>
            <Bar width="w-full" color={rainbow}>401 kWh/(m²a)</Bar>
          </Meter>
          <Meter label="Hᵀ">
            <Bar width="w-[43%]" color="bg-[#d5d5d5]">0,39 W/(m²K)</Bar>
            <Bar width="w-[76%]" color="bg-[#3f80b4]">0,70 W/(m²K)</Bar>
            <Bar width="w-full" color={rainbow}>1,21 W/(m²K)</Bar>
          </Meter>
          <Meter label="EH">
            <div className="flex h-[14px] gap-[2px] text-right text-[8px] leading-[14px] font-bold text-white">
              <span className="w-[32px] bg-[#b52a26]">40</span>
              <span className="w-[11px] bg-[#b52a26]">55</span>
              <span className="w-[11px] bg-[#b52a26]">70</span>
              <span className="w-[11px] bg-[#b52a26]">85</span>
              <span className="flex-1 bg-[#b52a26] pr-px">160</span>
            </div>
          </Meter>
        </div>
      </Card>
      <Card title={'Erneuerbare\nEnergien'} light="border-[#8a2020] bg-[#b52a26]" className="h-[88px] pt-1.5">
        <div className="mt-1">
          <Meter label="EE">
            <Bar width="w-[65%]" color="bg-[#d5d5d5]">65 %</Bar>
            <Bar width="w-full" color="bg-white">0,00 %</Bar>
          </Meter>
        </div>
      </Card>
      <Card title={'Sommerlicher\nWärmeschutz'} norm="DIN 4108-2" light="border-[#333] bg-white" className="h-[67px] pt-[7px]" />
      <Card title="Lüftungskonzept" norm="DIN 1946-6" light="border-[#5f9a20] bg-[#7db52a]" className="h-[84px] pt-[7px]">
        <div className="mt-[5px]">
          <Meter label={<span className="text-[7px] font-bold">ist min</span>}>
            <Bar width="w-[78%]" color="bg-[#d5d5d5]">26 m³/h</Bar>
            <Bar width="w-[61%]" color="bg-linear-to-r from-[#3f80b4] to-[#8cbbe2]">20 m³/h</Bar>
          </Meter>
        </div>
      </Card>
      <Card title="Beratung" norm="DIN V 18599" light="border-transparent" className="h-[88px] pt-[7px]">
        <div className="mt-[5px] space-y-[5px]">
          <Meter label="Qf">
            <Bar width="w-full" color={rainbow}>239 kWh/(m²a)</Bar>
          </Meter>
          <Meter label={<span className="text-[7px]">CO²</span>}>
            <Bar width="w-[87%]" color="bg-linear-to-r from-[#4f9a1f] via-[#ffdc46] to-[#cf5c30]">70 kg/(m²a)</Bar>
          </Meter>
        </div>
      </Card>
    </div>
  </aside>
);

export default function App() {
  return (
    <div className="flex h-screen w-full flex-col overflow-hidden bg-[#efefef] font-['DejaVu_Sans_Condensed','Noto_Sans',sans-serif] text-[9px] text-[#222]">
      <TitleBar />
      <Toolbar />
      <div className="flex min-h-0 flex-1 pt-px">
        <Sidebar />
        <Main />
        <ResultsPanel />
      </div>
    </div>
  );
}
